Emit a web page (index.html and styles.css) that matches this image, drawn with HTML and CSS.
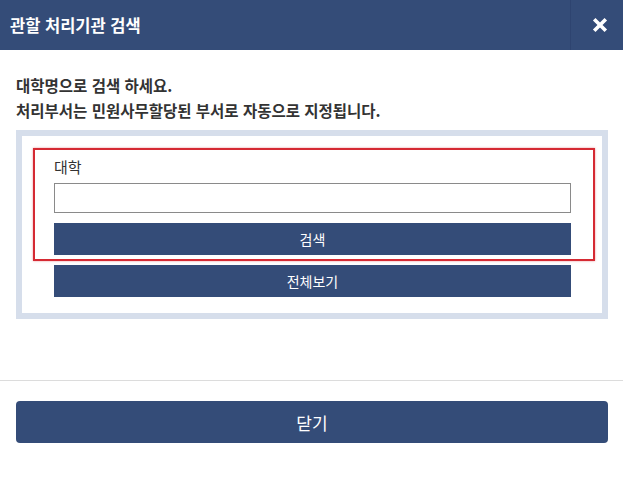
FILE: index.html
```html
<!DOCTYPE html>
<html lang="ko">
<head>
  <meta charset="UTF-8" />
  <meta name="viewport" content="width=device-width, initial-scale=1.0"/>
  <title>관할 처리기관 검색</title>
  <link rel="stylesheet" href="styles.css">
</head>
<body>

  <div class="modal">
    <div class="modal-header">
      <h2>관할 처리기관 검색</h2>
      <button class="btn-x" title="닫기">
        <svg width="16" height="16" viewBox="0 0 16 16">
          <path d="M2.2 2.2 L13.8 13.8 M13.8 2.2 L2.2 13.8" stroke="#fff" stroke-width="3.6" fill="none"/>
        </svg>
      </button>
    </div>

    <div class="modal-body">
      <p class="guide">대학명으로 검색 하세요.<br>처리부서는 민원사무할당된 부서로 자동으로 지정됩니다.</p>

      <div class="search-box">
        <div class="search-inner">
          <div class="highlight">
            <label for="univInput">대학</label>
            <input type="text" id="univInput">
            <button class="btn-navy btn-search">검색</button>
          </div>
          <button class="btn-navy btn-all">전체보기</button>
        </div>
      </div>
    </div>

    <div class="modal-footer">
      <button class="btn-close">닫기</button>
    </div>
  </div>

</body>
</html>
```

FILE: styles.css
```css
body {
  margin: 0;
  font-family: "Noto Sans CJK KR", "Noto Sans", sans-serif;
  background: #fff;
  color: #333;
}

.modal {
  width: 623px;
}

.modal-header {
  display: flex;
  align-items: center;
  height: 50px;
  background-color: #344c78;
}

.modal-header h2 {
  flex: 1;
  margin: 0;
  padding-left: 10px;
  font-size: 16.5px;
  font-weight: bold;
  color: #fff;
}

.btn-x {
  display: flex;
  align-items: center;
  justify-content: flex-end;
  width: 53px;
  height: 50px;
  padding: 0 15px 0 0;
  border: none;
  border-left: 1px solid #2e4470;
  background: transparent;
}

.modal-body {
  padding: 0 15px 0 16px;
}

.guide {
  margin: 23px 0 7px;
  font-size: 15.5px;
  font-weight: bold;
  line-height: 25px;
  color: #333;
}

.search-box {
  border: 6px solid #d6deeb;
}

.search-inner {
  padding: 12px 7px 16px 11px;
}

.highlight {
  border: 2px solid #d52a33;
  box-shadow: 0 0 2px rgba(213, 42, 51, 0.5);
  padding: 7px 22px 4px 19px;
}

.highlight label {
  display: block;
  font-size: 15px;
  line-height: 20px;
  color: #333;
  margin-bottom: 6px;
}

.highlight input[type="text"] {
  display: block;
  box-sizing: border-box;
  width: 100%;
  height: 30px;
  margin: 0;
  border: 1px solid #8a8a8a;
  font-size: 14px;
}

.btn-navy {
  display: block;
  height: 32px;
  border: none;
  background-color: #344c78;
  color: #fff;
  font-family: inherit;
  font-size: 14px;
}

.btn-search {
  width: 100%;
  margin-top: 10px;
}

.btn-all {
  width: calc(100% - 45px);
  margin: 4px 24px 0 21px;
}

.modal-footer {
  margin-top: 61px;
  border-top: 1px solid #dcdcdc;
  padding: 20px 15px 0 16px;
}

.btn-close {
  display: block;
  width: 100%;
  height: 42px;
  border: none;
  border-radius: 4px;
  background-color: #344c78;
  color: #fff;
  font-family: inherit;
  font-size: 17px;
}
```
